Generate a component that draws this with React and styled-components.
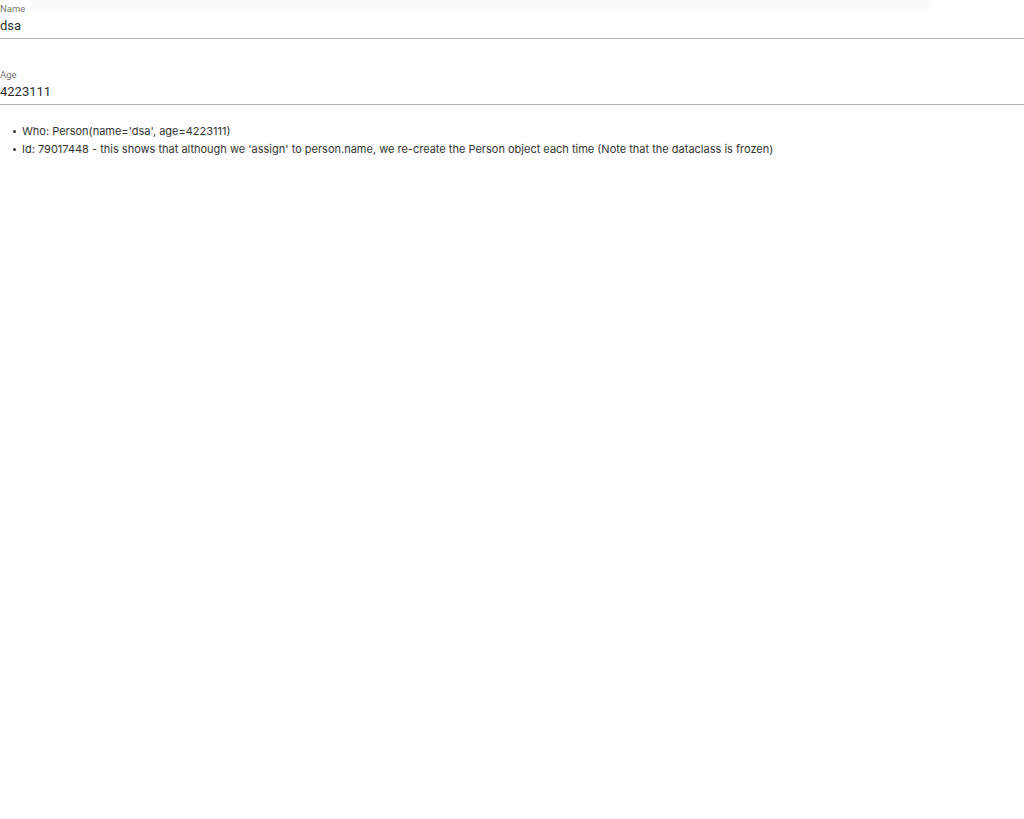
import React from "react";
import styled, { createGlobalStyle } from "styled-components";

const Global = createGlobalStyle`
  html, body { margin: 0; padding: 0; background: #fff; }
  body { font-family: Roboto, "Liberation Sans", sans-serif; color: rgba(0,0,0,0.87); }
`;

const Page = styled.div`
  position: relative;
  display: flex;
  flex-direction: column;
`;

const TopShade = styled.div`
  position: absolute;
  top: 0;
  left: 30px;
  width: 900px;
  height: 14px;
  background: linear-gradient(to bottom, rgba(0,0,0,0.035), rgba(0,0,0,0));
  filter: blur(2px);
  pointer-events: none;
`;

const Field = styled.div`
  display: flex;
  flex-direction: column;
  height: 39px;
  box-sizing: border-box;
  padding-top: 3px;
  border-bottom: 1px solid rgba(0,0,0,0.3);
  margin-bottom: ${(p) => p.$gap || 0}px;
`;

const Label = styled.label`
  font-size: 9.5px;
  line-height: 12px;
  color: rgba(0,0,0,0.6);
`;

const Input = styled.input`
  border: none;
  outline: none;
  padding: 0;
  margin: 0;
  font-family: Roboto, "Liberation Sans", sans-serif;
  font-size: 13px;
  line-height: 20px;
  height: 21px;
  color: rgba(0,0,0,0.87);
  background: transparent;
`;

const List = styled.ul`
  list-style: none;
  margin: 17px 0 0;
  padding-left: 22px;
  font-family: Inter, Roboto, sans-serif;
  font-size: 11px;
  line-height: 18px;
  color: #333;
`;

const Item = styled.li`
  position: relative;
  &::before {
    content: "";
    position: absolute;
    left: -9px;
    top: 8px;
    width: 3px;
    height: 3px;
    border-radius: 50%;
    background: #333;
  }
`;

export default function App() {
  return (
    <Page>
      <Global />
      <TopShade />
      <Field $gap={27}>
        <Label>Name</Label>
        <Input defaultValue="dsa" />
      </Field>
      <Field>
        <Label>Age</Label>
        <Input defaultValue="4223111" />
      </Field>
      <List>
        <Item>Who: Person(name='dsa', age=4223111)</Item>
        <Item>
          Id: 79017448 - this shows that although we 'assign' to person.name, we re-create the Person object each time (Note that the dataclass is frozen)
        </Item>
      </List>
    </Page>
  );
}
